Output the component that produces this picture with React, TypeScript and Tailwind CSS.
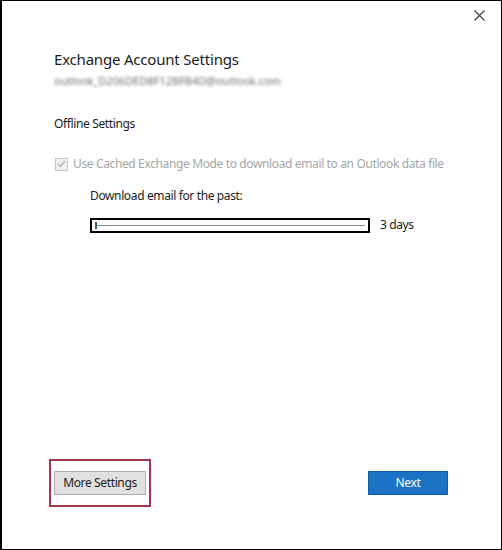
import React from "react";

function CloseIcon() {
  return (
    <svg width="11" height="11" viewBox="0 0 11 11" fill="none">
      <path d="M0.5 0.5L10.5 10.5M10.5 0.5L0.5 10.5" stroke="#3a3a3a" strokeWidth="1.1" />
    </svg>
  );
}

function DisabledCheckbox() {
  return (
    <div className="w-[13px] h-[13px] border border-[#c6c6c6] bg-[#f0f0f0] flex items-center justify-center shrink-0">
      <svg width="9" height="8" viewBox="0 0 9 8" fill="none">
        <polyline points="1,4 3.5,6.5 8,1" stroke="#b4b4b4" strokeWidth="1.4" />
      </svg>
    </div>
  );
}

export default function App() {
  return (
    <div
      className="w-[502px] h-[550px] bg-white border-t border-r border-b border-l-2 border-black flex flex-col text-[#1a1a1a]"
      style={{ fontFamily: '"Noto Sans", "Open Sans", sans-serif' }}
    >
      {/* Close */}
      <div className="flex justify-end pt-[9px] pr-[16px]">
        <button type="button" className="p-0">
          <CloseIcon />
        </button>
      </div>

      <div className="pl-[52px] pr-6 flex flex-col">
        {/* Title */}
        <h1 className="mt-[27px] text-[15px] leading-[22px] tracking-[-0.2px] text-[#1b1b1b]">
          Exchange Account Settings
        </h1>
        <p className="mt-[4px] text-[11px] leading-[14px] text-[#6f6f6f] blur-[1.4px] select-none">
          outlook_D206DED8F12BFB4D@outlook.com
        </p>

        <p className="mt-[28px] text-[12px] leading-[16px] tracking-[-0.37px] text-[#1b1b1b]">Offline Settings</p>

        {/* Cached mode */}
        <label className="mt-[24px] flex items-center gap-[5px] text-[12px] leading-[16px] tracking-[-0.37px] text-[#a6a6a6] pl-[1px]">
          <DisabledCheckbox />
          <span>Use Cached Exchange Mode to download email to an Outlook data file</span>
        </label>

        <div className="pl-[36px] flex flex-col">
          <p className="mt-[16px] text-[12px] leading-[16px] tracking-[-0.37px] text-[#1b1b1b]">
            Download email for the past:
          </p>

          <div className="mt-[13px] flex items-center gap-[10px]">
            <div className="w-[280px] h-[15px] border-2 border-black flex items-center px-[3px] relative">
              <div className="h-px w-full bg-[#8a8a8a]" />
              <div className="absolute left-[3px] top-[2px] w-[2px] h-[7px] bg-[#2f6b63]" />
            </div>
            <span className="text-[12px] leading-[16px] tracking-[-0.37px] text-[#1b1b1b]">3 days</span>
          </div>
        </div>
      </div>

      <div className="flex-1" />

      {/* Buttons */}
      <div className="flex items-center justify-between pl-[47px] pr-[53px] pb-[42px]">
        <div className="border-2 border-[#a4364f] px-[3px] pt-[8px] pb-[10px]">
          <button
            type="button"
            className="w-[92px] h-[24px] bg-[#e1e1e1] border border-[#adadad] text-[12px] tracking-[-0.37px] text-[#1b1b1b]"
          >
            More Settings
          </button>
        </div>
        <button
          type="button"
          className="w-[80px] h-[24px] bg-[#1b72c4] border border-[#155e9f] text-[12px] tracking-[-0.37px] text-white"
        >
          Next
        </button>
      </div>
    </div>
  );
}
